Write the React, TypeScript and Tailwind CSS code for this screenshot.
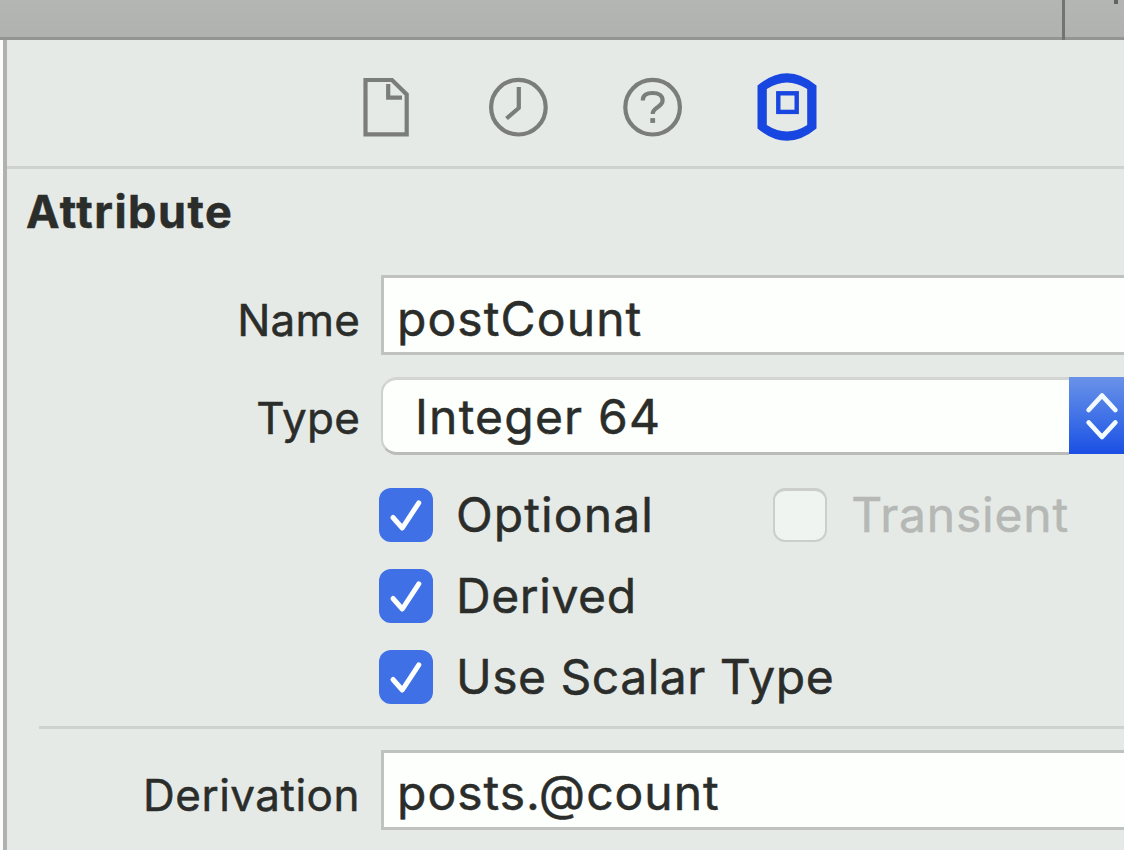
import type { ReactNode } from "react";

function FileIcon() {
  return (
    <svg width="48" height="60" viewBox="0 0 48 60" fill="none" stroke="#7b7d7a" strokeWidth="4.2">
      <path d="M3.5 3H30L44.7 17.5V57.3H3.5Z" />
      <path d="M26.2 7V20.7H40" />
    </svg>
  );
}

function ClockIcon() {
  return (
    <svg width="60" height="60" viewBox="0 0 60 60" fill="none" stroke="#7b7d7a" strokeWidth="4.2">
      <circle cx="30.4" cy="30.2" r="27.3" />
      <path d="M30.8 10V31L18.5 41.5" strokeLinejoin="round" />
    </svg>
  );
}

function HelpIcon() {
  return (
    <svg width="60" height="60" viewBox="0 0 60 60" fill="none" stroke="#7b7d7a" strokeWidth="4.2">
      <circle cx="30.6" cy="30.2" r="27.3" />
      <path d="M20.8 23.5C20.8 18 24.5 16 30.5 16C37 16 40.6 18.8 40.6 23.3C40.6 30.5 30.7 30 30.7 37" />
      <path d="M28.3 43.5H33.1" strokeWidth="4.8" />
    </svg>
  );
}

function DataModelIcon() {
  return (
    <svg width="60" height="70" viewBox="0 0 60 70" fill="none">
      <path
        d="M0.5 13.5Q30 -11 59.5 13.5V56.5Q30 81 0.5 56.5ZM9.8 17V53Q30 66 50.2 53V17Q30 4 9.8 17Z"
        fill="#1846e0"
        fillRule="evenodd"
      />
      <rect x="21.3" y="21.3" width="18.4" height="18.6" stroke="#1846e0" strokeWidth="4.4" />
    </svg>
  );
}

function Checkbox({ tracking, children }: { tracking: string; children: ReactNode }) {
  return (
    <div className="flex h-[54px] items-center">
      <span className="flex size-[54px] shrink-0 items-center justify-center rounded-[12px] bg-[#3f70e6]">
        <svg width="54" height="54" viewBox="0 0 54 54" fill="none" stroke="#fdfffe" strokeWidth="5" strokeLinecap="round" strokeLinejoin="round">
          <path d="M14 29.5L23.3 40L39.8 14.8" />
        </svg>
      </span>
      <span className={`ml-[23px] whitespace-nowrap text-[48px] leading-[54px] ${tracking}`}>{children}</span>
    </div>
  );
}

function Label({ tracking = "", children }: { tracking?: string; children: ReactNode }) {
  return <div className={`mr-[21px] w-[353px] shrink-0 text-right text-[44px] leading-[78px] ${tracking}`}>{children}</div>;
}

export default function App() {
  return (
    <div className="flex h-[850px] w-[1124px] flex-col overflow-hidden bg-[#e6eae6] font-['Inter',sans-serif] font-normal text-[#2b2d2b] [-webkit-text-stroke:0.5px_currentColor]">
      <header className="flex h-10 shrink-0 justify-end border-b-[3px] border-[#939592] bg-gradient-to-b from-[#b4b6b3] to-[#b0b2af]">
        <div className="h-10 w-[3px] bg-[#727471]" />
        <div className="ml-[49px] mr-[6px] h-1 w-1 bg-[#626461]" />
      </header>
      <div className="flex min-h-0 flex-1">
        <div className="w-[3px] shrink-0 bg-[#fbfdfb]" />
        <div className="w-1 shrink-0 bg-[#b0b2af]" />
        <main className="flex min-w-0 flex-1 flex-col">
          <nav className="flex h-[129px] shrink-0 items-center border-b-[3px] border-[#cfd2ce] pl-[355px] pt-[8px]">
            <FileIcon />
            <div className="ml-[78px]"><ClockIcon /></div>
            <div className="ml-[74px]"><HelpIcon /></div>
            <div className="ml-[75px]"><DataModelIcon /></div>
          </nav>
          <h2 className="ml-[19px] mt-[18px] h-[50px] text-[45px] font-bold leading-[50px] tracking-[1.5px]">Attribute</h2>
          <div className="mt-[38px] flex h-[80px] shrink-0">
            <div className="pt-[6px]"><Label tracking="tracking-[0.2px]">Name</Label></div>
            <div className="flex-1 border-[3px] border-r-0 border-[#bfc2be] bg-[#fdfffd] pl-[13px] pt-[2px] text-[48px] leading-[77px] tracking-[1.1px]">
              postCount
            </div>
          </div>
          <div className="mt-[22px] flex h-[78px] shrink-0">
            <div className="pt-[2px]"><Label tracking="tracking-[0.2px]">Type</Label></div>
            <div className="flex flex-1">
              <div className="flex-1 rounded-l-[16px] border-y-[3px] border-l-2 border-b-[#b9bcb8] border-l-[#cdd0cc] border-t-[#d2d5d1] bg-[#fdfffd] pl-[32px] text-[48px] leading-[73px] tracking-[1.2px]">
                Integer 64
              </div>
              <div className="mb-px flex w-[55px] items-center justify-center bg-gradient-to-b from-[#6a92e8] to-[#1a4ee4] pl-[10px]">
                <svg width="34" height="50" viewBox="0 0 34 50" fill="none" stroke="#f4fbff" strokeWidth="4.8" strokeLinecap="round" strokeLinejoin="round">
                  <path d="M3.7 19L17 4.5L30.3 19M3.7 31.5L17 46L30.3 31.5" />
                </svg>
              </div>
            </div>
          </div>
          <div className="ml-[372px] mt-[32.5px] flex flex-col gap-[27px]">
            <div className="flex items-center">
              <Checkbox tracking="tracking-[1.1px]">Optional</Checkbox>
              <div className="ml-auto mr-[57px] flex items-center gap-[24px] text-[48px] leading-[54px] tracking-[0.8px] text-[#b5b8b5]">
                <span className="size-[54px] rounded-[12px] border-2 border-t-[3px] border-[#cbcecb] bg-[#f0f4f0]" />
                <span className="-mr-[2px]">Transient</span>
              </div>
            </div>
            <Checkbox tracking="tracking-[0.6px]">Derived</Checkbox>
            <Checkbox tracking="tracking-[0.5px]">Use Scalar Type</Checkbox>
          </div>
          <div className="ml-8 mt-[22.5px] h-[3px] shrink-0 bg-[#cfd2ce]" />
          <div className="mt-[21px] flex h-[80px] shrink-0">
            <div className="pt-[6px]"><Label tracking="tracking-[0.5px]">Derivation</Label></div>
            <div className="flex-1 border-[3px] border-r-0 border-[#bfc2be] bg-[#fdfffd] pl-[13px] pt-px text-[48px] leading-[78px] tracking-[1px]">posts.@count</div>
          </div>
        </main>
      </div>
    </div>
  );
}
